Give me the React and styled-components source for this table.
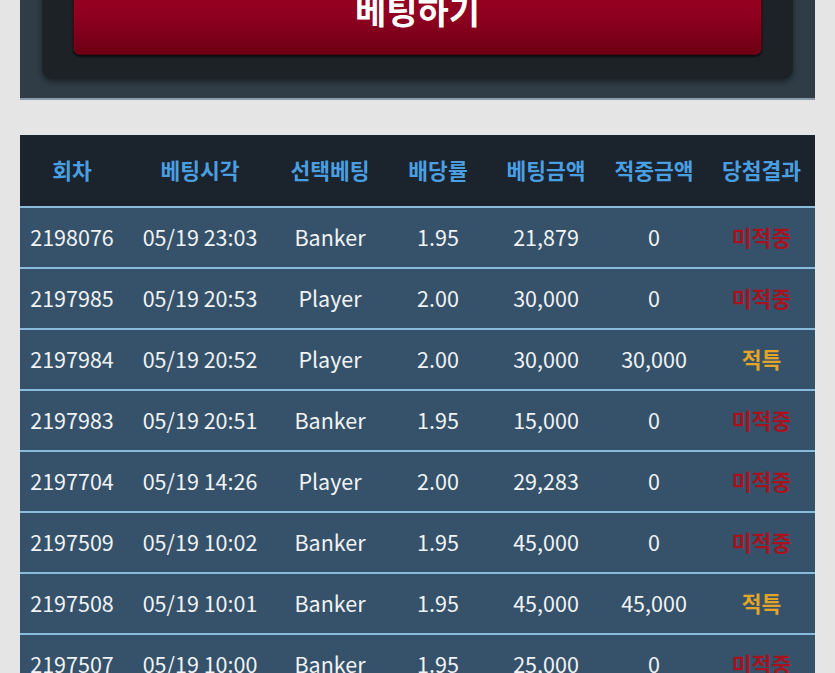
import styled, { createGlobalStyle } from "styled-components";

const GlobalStyle = createGlobalStyle`
  html, body {
    margin: 0;
    padding: 0;
    background: #e5e5e5;
    font-family: "Noto Sans CJK KR", "Noto Sans", sans-serif;
    overflow: hidden;
  }
`;

const Page = styled.div`
  padding: 0 20px;
`;

const BetPanel = styled.div`
  margin-top: -73px;
  background: #303d47;
  border-bottom: 2px solid #8a9cab;
  padding: 20px 22px 19px 22px;
`;

const BetInner = styled.div`
  background: #1c2226;
  border-radius: 10px;
  box-shadow: 0 3px 6px rgba(0, 0, 0, 0.45);
  padding: 24px 31px 24px 31px;
`;

const BetButton = styled.button`
  display: flex;
  align-items: center;
  justify-content: center;
  width: 100%;
  height: 84px;
  border: 1px solid #4e0010;
  border-radius: 7px;
  background: linear-gradient(to bottom, #a0001f 0%, #8e0020 55%, #6c0015 100%);
  box-shadow: 0 2px 2px rgba(0, 0, 0, 0.6), inset 0 0 1px rgba(255, 60, 60, 0.5);
  color: #ffffff;
  font-family: "Noto Sans CJK KR", sans-serif;
  font-size: 34px;
  font-weight: 700;
  padding: 0 0 8px 0;
`;

const Table = styled.div`
  margin-top: 35px;
`;

const Row = styled.div`
  display: grid;
  grid-template-columns: 104px 152px 108px 108px 108px 108px 1fr;
  align-items: center;
  box-sizing: border-box;
  height: ${(p) => (p.$head ? "71px" : "61px")};
  background: ${(p) => (p.$head ? "#1b242c" : "#35526a")};
  border-top: ${(p) => (p.$head ? "none" : "2px solid #88bbdc")};
  padding-bottom: 2px;
`;

const HeadCell = styled.div`
  text-align: center;
  color: #4a9fe2;
  font-size: 21.5px;
  font-weight: 700;
`;

const Cell = styled.div`
  text-align: center;
  color: ${(p) => p.$color || "#f1f3f5"};
  font-size: 21.5px;
  font-weight: ${(p) => (p.$bold ? 700 : 400)};
  white-space: nowrap;
`;

const heads = ["회차", "베팅시각", "선택베팅", "배당률", "베팅금액", "적중금액", "당첨결과"];

const rows = [
  ["2198076", "05/19 23:03", "Banker", "1.95", "21,879", "0", "미적중"],
  ["2197985", "05/19 20:53", "Player", "2.00", "30,000", "0", "미적중"],
  ["2197984", "05/19 20:52", "Player", "2.00", "30,000", "30,000", "적특"],
  ["2197983", "05/19 20:51", "Banker", "1.95", "15,000", "0", "미적중"],
  ["2197704", "05/19 14:26", "Player", "2.00", "29,283", "0", "미적중"],
  ["2197509", "05/19 10:02", "Banker", "1.95", "45,000", "0", "미적중"],
  ["2197508", "05/19 10:01", "Banker", "1.95", "45,000", "45,000", "적특"],
  ["2197507", "05/19 10:00", "Banker", "1.95", "25,000", "0", "미적중"],
];

const resultColor = (r) => (r === "적특" ? "#e2a526" : "#a8121f");

export default function App() {
  return (
    <>
      <GlobalStyle />
      <Page>
        <BetPanel>
          <BetInner>
            <BetButton>베팅하기</BetButton>
          </BetInner>
        </BetPanel>

        <Table>
          <Row $head>
            {heads.map((h) => (
              <HeadCell key={h}>{h}</HeadCell>
            ))}
          </Row>
          {rows.map((r) => (
            <Row key={r[0]}>
              {r.slice(0, 6).map((v, i) => (
                <Cell key={i}>{v}</Cell>
              ))}
              <Cell $bold $color={resultColor(r[6])}>{r[6]}</Cell>
            </Row>
          ))}
        </Table>
      </Page>
    </>
  );
}
